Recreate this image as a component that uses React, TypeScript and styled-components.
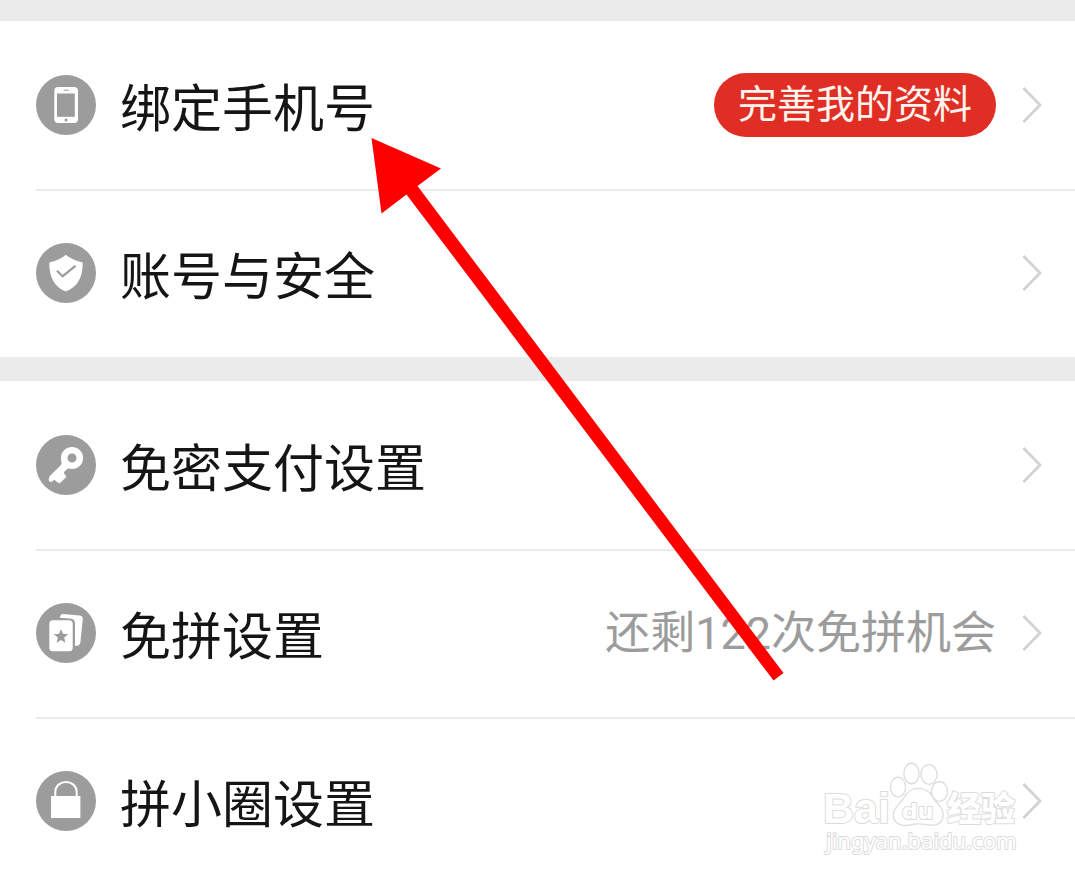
import React from "react";
import styled, { createGlobalStyle } from "styled-components";

const GlobalStyle = createGlobalStyle`
  *, *::before, *::after { box-sizing: border-box; }
  body {
    margin: 0;
    background: #ffffff;
    font-family: Roboto, "Noto Sans CJK SC", sans-serif;
  }
`;

const Page = styled.main`
  position: relative;
  width: 100%;
  overflow: hidden;
`;

const Band = styled.div<{ $size: number }>`
  height: ${(p) => p.$size}px;
  background: #ebebeb;
`;

const RowLink = styled.a<{ $last?: boolean }>`
  display: flex;
  align-items: center;
  min-height: ${(p) => (p.$last ? 162 : 168)}px;
  padding: ${(p) => (p.$last ? 6 : 0)}px 33px 0 0;
  color: #151515;
  text-decoration: none;
`;

const Group = styled.ul`
  list-style: none;
  margin: 0;
  padding: 0 0 0 36px;
`;

const Item = styled.li`
  position: relative;
  & + &::before {
    content: "";
    position: absolute;
    inset: 0 0 auto 0;
    height: 2px;
    background: #ebebeb;
  }
`;

const RoundIcon = styled.svg`
  flex: none;
  width: 60px;
  height: 60px;
`;

const Label = styled.span`
  flex: 1;
  margin-left: 24px;
  font-family: "Noto Sans CJK SC", sans-serif;
  font-size: 51px;
  line-height: 60px;
  white-space: nowrap;
`;

const Pill = styled.span`
  padding: 0 24px;
  border-radius: 32px;
  background: #e02e24;
  color: #fff4ee;
  font-size: 39px;
  line-height: 64px;
  white-space: nowrap;
`;

const Note = styled.span`
  padding-top: 2px;
  color: #9c9c9c;
  font-size: 45px;
  line-height: 60px;
  white-space: nowrap;
`;

const ChevronIcon = styled.svg`
  flex: none;
  width: 20px;
  height: 38px;
  margin-left: 26px;
`;

const Arrow = styled.svg`
  position: absolute;
  left: 371px;
  top: 138px;
  width: 413px;
  height: 543px;
  pointer-events: none;
`;

const Watermark = styled.svg`
  position: absolute;
  right: 53px;
  bottom: 17px;
  width: 202px;
  height: 102px;
  pointer-events: none;
`;

const GREY = "#9c9c9c";

function Chevron() {
  return (
    <ChevronIcon viewBox="0 0 20 38" aria-hidden="true">
      <path d="M1.5 2 L18 19 L1.5 36" fill="none" stroke="#d3d3d3" strokeWidth="2.8" />
    </ChevronIcon>
  );
}

const glyphs = {
  phone: (
    <>
      <rect x="18.3" y="12" width="23.7" height="36" rx="4" fill="#fff" />
      <rect x="21" y="18.5" width="17.8" height="23.3" fill={GREY} />
      <path d="M28 15.2h4.4" stroke={GREY} strokeWidth="1" strokeLinecap="round" />
      <circle cx="30" cy="45" r="1.5" fill={GREY} />
    </>
  ),
  shield: (
    <>
      <path
        d="M29.8 11.8 C34 15.5 39.5 17.8 46 19.2 Q46.7 19.5 46.7 20.5 C46.6 34 42 44 29.8 48.4 C18 44 13.4 34 13.3 20.5 Q13.3 19.5 14 19.2 C20.5 17.8 25.8 15.5 29.8 11.8Z"
        fill="#fff"
      />
      <path d="M21 27.8 L26.7 33.2 L39.5 22.8" fill="none" stroke={GREY} strokeWidth="2.2" />
    </>
  ),
  key: (
    <>
      <path
        d="M25.3 26.5 C26 29 25.6 29.4 24 31 L13.4 41.5 L12.6 45 Q13 47 15.4 46.9 L18.3 44.8 L22.4 48 Q23.8 48.6 24.8 47.2 L30.5 41.8 L28 38.2 Q27.8 36.8 29 36 L32.4 33.3 L36 30Z"
        fill="#fff"
      />
      <circle cx="36" cy="23" r="7.8" fill={GREY} stroke="#fff" strokeWidth="6.6" />
    </>
  ),
  cards: (
    <>
      <path
        d="M23.7 14.8 L24.4 12.7 Q25 11 27 11 L43.8 12.5 Q47 13 46.8 16 L44.4 39.6 Q44 42.3 41.4 42.8 L39 43 V20.6 Q39 15.7 34.4 15.4Z"
        fill="#fff"
      />
      <rect x="13.3" y="17.3" width="23.4" height="31" rx="3.5" fill="#fff" />
      <path
        d="M25 26 L27 30.8 L32.2 31.2 L28.2 34.6 L29.4 39.7 L25 37 L20.6 39.7 L21.8 34.6 L17.8 31.2 L23 30.8Z"
        fill={GREY}
      />
    </>
  ),
  lock: (
    <>
      <rect x="15" y="25" width="29.4" height="22" rx="0.6" fill="#fff" />
      <path d="M19.3 25.5 V21.5 C19.3 7.5 40.7 7.5 40.7 21.5 V25.5" fill="none" stroke="#fff" strokeWidth="2" />
    </>
  ),
};

interface RowProps {
  icon: keyof typeof glyphs;
  label: string;
  last?: boolean;
  children?: React.ReactNode;
}

function Row({ icon, label, last, children }: RowProps) {
  return (
    <Item>
      <RowLink href="#" $last={last}>
        <RoundIcon viewBox="0 0 60 60" aria-hidden="true">
          <circle cx="30" cy="30" r="30" fill={GREY} />
          {glyphs[icon]}
        </RoundIcon>
        <Label>{label}</Label>
        {children}
        <Chevron />
      </RowLink>
    </Item>
  );
}

export default function App() {
  return (
    <Page>
      <GlobalStyle />
      <Band $size={21} />
      <Group>
        <Row icon="phone" label="绑定手机号">
          <Pill>完善我的资料</Pill>
        </Row>
        <Row icon="shield" label="账号与安全" />
      </Group>
      <Band $size={24} />
      <Group>
        <Row icon="key" label="免密支付设置" />
        <Row icon="cards" label="免拼设置">
          <Note>还剩122次免拼机会</Note>
        </Row>
        <Row icon="lock" label="拼小圈设置" last />
      </Group>

      <Arrow viewBox="0 0 413 543" aria-hidden="true">
        <path d="M0.5 0 L70 30.5 L46.5 48 L412.5 535 L402.5 542.5 L35.5 56.5 L10.5 75.5Z" fill="#ff0000" />
      </Arrow>

      <Watermark viewBox="0 0 202 102" aria-label="Baidu 经验">
        <g fill="#ffffff" stroke="#dcdcdc" strokeWidth="2" strokeLinejoin="round" paintOrder="stroke">
          <text x="3" y="63" fontFamily="Liberation Sans, sans-serif" fontWeight="700" fontSize="43">
            Bai
          </text>
          <g strokeWidth="2.6">
            <ellipse cx="78" cy="27" rx="7" ry="9.2" />
            <ellipse cx="91.5" cy="13.5" rx="7" ry="9.6" />
            <ellipse cx="109" cy="14.5" rx="7.4" ry="9.2" />
            <ellipse cx="119.5" cy="31.5" rx="7.4" ry="9.2" />
            <path d="M98 29 C105 29 109 32 112 37 C116 44 123 48 122.5 55 C122 64 115 65.5 107 64 C101 63 95 63 89 64.5 C80 66 74 62 74 55 C74 48 80 45 84 39 C87 33 91 29 98 29Z" />
          </g>
          <text x="82" y="59" fontFamily="DejaVu Sans, sans-serif" fontWeight="700" fontSize="22">
            du
          </text>
          <text x="127" y="61" fontFamily="Noto Sans CJK SC, sans-serif" fontWeight="900" fontSize="34">
            经验
          </text>
          <text x="6" y="89" fontFamily="Noto Sans, sans-serif" fontWeight="400" fontSize="22">
            jingyan.baidu.com
          </text>
        </g>
      </Watermark>
    </Page>
  );
}
